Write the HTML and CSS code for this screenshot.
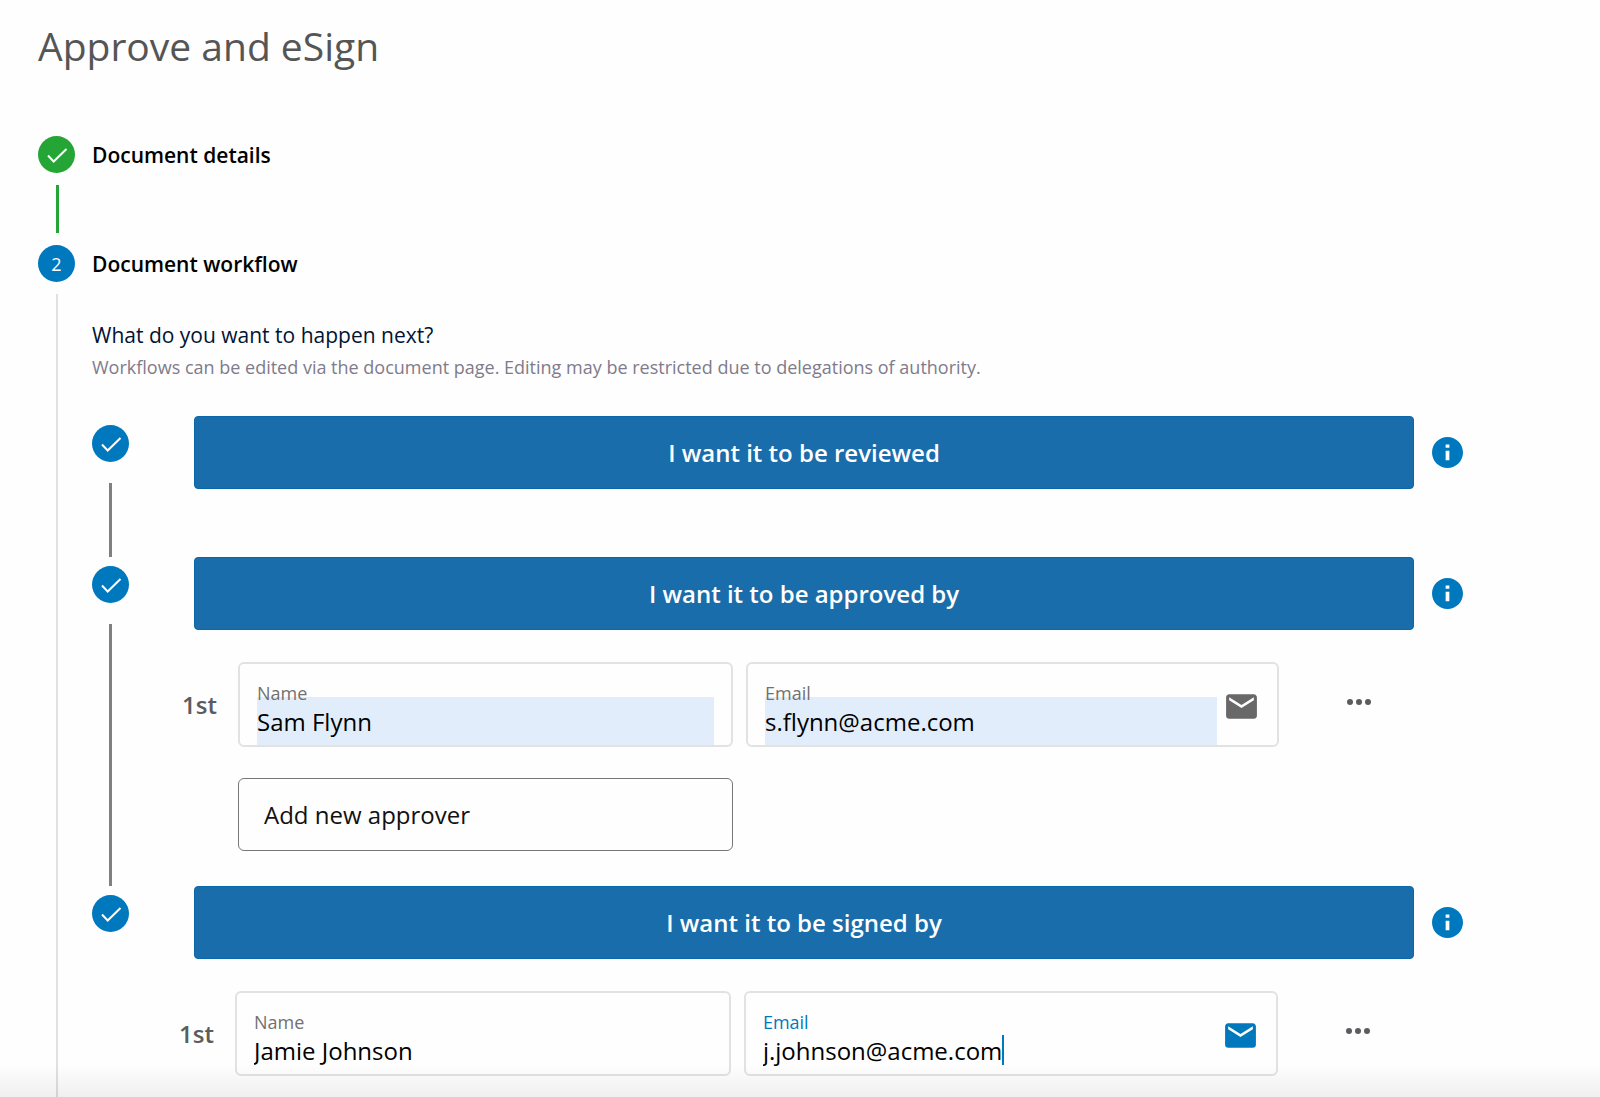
FILE: index.html
```html
<!DOCTYPE html>
<html lang="en">

<head>
  <meta charset="UTF-8" />
  <meta name="viewport" content="width=device-width, initial-scale=1.0" />
  <title>Approve and eSign</title>
  <link rel="stylesheet" href="styles.css">
</head>

<body>
  <svg class="sprite" aria-hidden="true">
    <symbol id="icon-check" viewBox="0 0 36 36">
      <path d="M9 18.5l5.700 6L27.500 12" fill="none" stroke="currentColor" stroke-width="2" />
    </symbol>
    <symbol id="icon-info" viewBox="2 2 20 20">
      <path d="M12 2C6.480 2 2 6.480 2 12s4.480 10 10 10 10-4.480 10-10S17.520 2 12 2zm1.200 15h-2.400v-6.200h2.400V17zm0-8h-2.400V6.800h2.400V9z" fill="currentColor" />
    </symbol>
    <symbol id="icon-mail" viewBox="0 0 24 24">
      <path d="M20 4H4c-1.100 0-1.990.9-1.990 2L2 18c0 1.100.9 2 2 2h16c1.100 0 2-.9 2-2V6c0-1.100-.9-2-2-2zm0 4l-8 5-8-5V6l8 5 8-5v2z" fill="currentColor" />
    </symbol>
    <symbol id="icon-more" viewBox="0 0 24 6">
      <circle cx="3" cy="3" r="3" fill="currentColor" />
      <circle cx="12" cy="3" r="3" fill="currentColor" />
      <circle cx="21" cy="3" r="3" fill="currentColor" />
    </symbol>
  </svg>

  <main class="page">
    <h1>Approve and eSign</h1>

    <div class="step">
      <span class="badge badge-done"><svg><use href="#icon-check" /></svg></span>
      <h2>Document details</h2>
    </div>
    <div class="step-line"></div>
    <div class="step">
      <span class="badge">2</span>
      <h2>Document workflow</h2>
    </div>

    <section class="step-body">
      <h3>What do you want to happen next?</h3>
      <p class="hint">Workflows can be edited via the document page. Editing may be restricted due to delegations of authority.</p>

      <div class="stage">
        <div class="rail">
          <span class="badge"><svg><use href="#icon-check" /></svg></span>
          <span class="rail-line"></span>
        </div>
        <div class="stage-content">
          <div class="stage-head">
            <button class="stage-button" type="button">I want it to be reviewed</button>
            <button class="info-button" type="button" aria-label="About reviewing"><svg><use href="#icon-info" /></svg></button>
          </div>
        </div>
      </div>

      <div class="stage">
        <div class="rail">
          <span class="badge"><svg><use href="#icon-check" /></svg></span>
          <span class="rail-line"></span>
        </div>
        <div class="stage-content">
          <div class="stage-head">
            <button class="stage-button" type="button">I want it to be approved by</button>
            <button class="info-button" type="button" aria-label="About approving"><svg><use href="#icon-info" /></svg></button>
          </div>
          <div class="person">
            <span class="order">1st</span>
            <div class="field">
              <label for="approver-name">Name</label>
              <input class="autofilled" id="approver-name" type="text" value="Sam Flynn">
            </div>
            <div class="field field-email">
              <label for="approver-email">Email</label>
              <input class="autofilled" id="approver-email" type="text" value="s.flynn@acme.com">
              <svg class="mail"><use href="#icon-mail" /></svg>
            </div>
            <button class="more-button" type="button" aria-label="Approver options"><svg><use href="#icon-more" /></svg></button>
            <button class="add-button" type="button">Add new approver</button>
          </div>
        </div>
      </div>

      <div class="stage">
        <div class="rail">
          <span class="badge"><svg><use href="#icon-check" /></svg></span>
        </div>
        <div class="stage-content">
          <div class="stage-head">
            <button class="stage-button" type="button">I want it to be signed by</button>
            <button class="info-button" type="button" aria-label="About signing"><svg><use href="#icon-info" /></svg></button>
          </div>
          <div class="person person-signer">
            <span class="order">1st</span>
            <div class="field">
              <label for="signer-name">Name</label>
              <input id="signer-name" type="text" value="Jamie Johnson">
            </div>
            <div class="field field-email field-active">
              <label for="signer-email">Email</label>
              <input id="signer-email" type="text" value="j.johnson@acme.com">
              <span class="caret"></span>
              <svg class="mail"><use href="#icon-mail" /></svg>
            </div>
            <button class="more-button" type="button" aria-label="Signer options"><svg><use href="#icon-more" /></svg></button>
          </div>
        </div>
      </div>
    </section>
  </main>
</body>

</html>
```

FILE: styles.css
```css
* {
  box-sizing: border-box;
}

body {
  margin: 0;
  background-color: #fefefe;
  color: #000;
  font-family: "Open Sans", "Noto Sans", sans-serif;
}

/* fade at the bottom edge of the window */
body::after {
  content: "";
  position: fixed;
  left: 0;
  right: 0;
  bottom: 0;
  height: 32px;
  background: linear-gradient(rgba(0, 0, 0, 0), rgba(0, 0, 0, 0.06));
  pointer-events: none;
}

button,
input {
  font-family: inherit;
}

button {
  cursor: pointer;
}

h1,
h2,
h3,
p {
  margin: 0;
}

.sprite {
  display: none;
}

.page {
  display: flex;
  flex-direction: column;
  min-height: 100vh;
  padding: 20px 137px 0 38px;
}

h1 {
  margin-bottom: 64px;
  color: #555;
  font-size: 39px;
  font-weight: 400;
  line-height: 52px;
}

.step {
  display: flex;
  align-items: center;
  gap: 17px;
}

h2 {
  padding-top: 2px;
  font-size: 21px;
  font-weight: 600;
  line-height: 35px;
}

.badge {
  display: flex;
  align-items: center;
  justify-content: center;
  flex-shrink: 0;
  width: 37px;
  height: 37px;
  border-radius: 50%;
  background-color: #0078be;
  color: #fff;
  font-size: 18px;
}

.badge svg {
  width: 36px;
  height: 36px;
}

.badge-done {
  background-color: #24a535;
}

.step-line {
  width: 3px;
  height: 48px;
  margin: 12px 0 12px 18px;
  background-color: #24a535;
}

.step-body {
  flex-grow: 1;
  margin: 12px 0 0 18px;
  padding: 25px 0 0 34px;
  border-left: 2px solid #e0e0e0;
}

h3 {
  color: #001433;
  font-size: 21px;
  font-weight: 400;
  line-height: 32px;
}

.hint {
  margin-bottom: 33px;
  color: #7f7b8b;
  font-size: 18px;
  line-height: 32px;
}

.stage {
  display: flex;
}

.rail {
  display: flex;
  flex-direction: column;
  align-items: center;
  flex-shrink: 0;
  width: 37px;
  padding-top: 9px;
}

.rail-line {
  flex-grow: 1;
  width: 3px;
  margin-top: 21px;
  background-color: #808080;
}

.stage-content {
  flex-grow: 1;
}

.stage-head {
  display: flex;
  align-items: center;
  gap: 18px;
  padding-left: 65px;
}

.stage:first-of-type .stage-head {
  margin-bottom: 68px;
}

.stage-button {
  flex-grow: 1;
  height: 73px;
  border: 1px solid #0a68aa;
  border-radius: 4px;
  background-color: #1a6dab;
  color: #fff;
  font-size: 24px;
  font-weight: 600;
}

.info-button {
  display: flex;
  padding: 0;
  border: none;
  background: none;
  color: #0078be;
}

.info-button svg {
  width: 31px;
  height: 31px;
}

.person {
  display: grid;
  grid-template-columns: 43px 495fr 588fr 24px;
  align-items: center;
  column-gap: 13px;
  row-gap: 31px;
  margin-top: 32px;
  padding: 0 92px 35px 53px;
}

.person-signer {
  padding-right: 93px;
  padding-left: 50px;
}

.order {
  color: #5a5c5f;
  font-size: 24px;
  font-weight: 600;
}

.field {
  position: relative;
  display: flex;
  align-items: center;
  min-width: 0;
  height: 85px;
  padding: 33px 17px 0;
  border: 2px solid #e2e2e2;
  border-radius: 6px;
}

.field label {
  position: absolute;
  top: 17px;
  left: 17px;
  color: #717171;
  font-size: 18px;
  line-height: 24px;
}

.field input {
  flex-grow: 1;
  min-width: 0;
  height: 48px;
  padding: 0;
  border: none;
  outline: none;
  background: none;
  color: #000;
  font-size: 24px;
}

.field .autofilled {
  background-color: #e2edfc;
}

.field-email {
  margin-right: 55px;
}

.mail {
  flex-shrink: 0;
  width: 37px;
  height: 37px;
  margin: 0 0 30px 6px;
  color: #686868;
}

.field-active label,
.field-active .mail {
  color: #0078be;
}

/* input hugs its text so the caret sits right after it */
.field-active input {
  flex-grow: 0;
  field-sizing: content;
}

.field-active .mail {
  margin-left: auto;
}

.caret {
  width: 2px;
  height: 30px;
  background-color: #0078be;
}

.more-button {
  display: flex;
  padding: 0 0 6px;
  border: none;
  background: none;
  color: #5a5c5f;
}

.more-button svg {
  width: 24px;
  height: 6px;
}

.add-button {
  grid-column: 2;
  height: 73px;
  padding: 0 25px;
  border: 1px solid #777;
  border-radius: 6px;
  background: none;
  color: #111;
  font-size: 24px;
  text-align: left;
}
```
